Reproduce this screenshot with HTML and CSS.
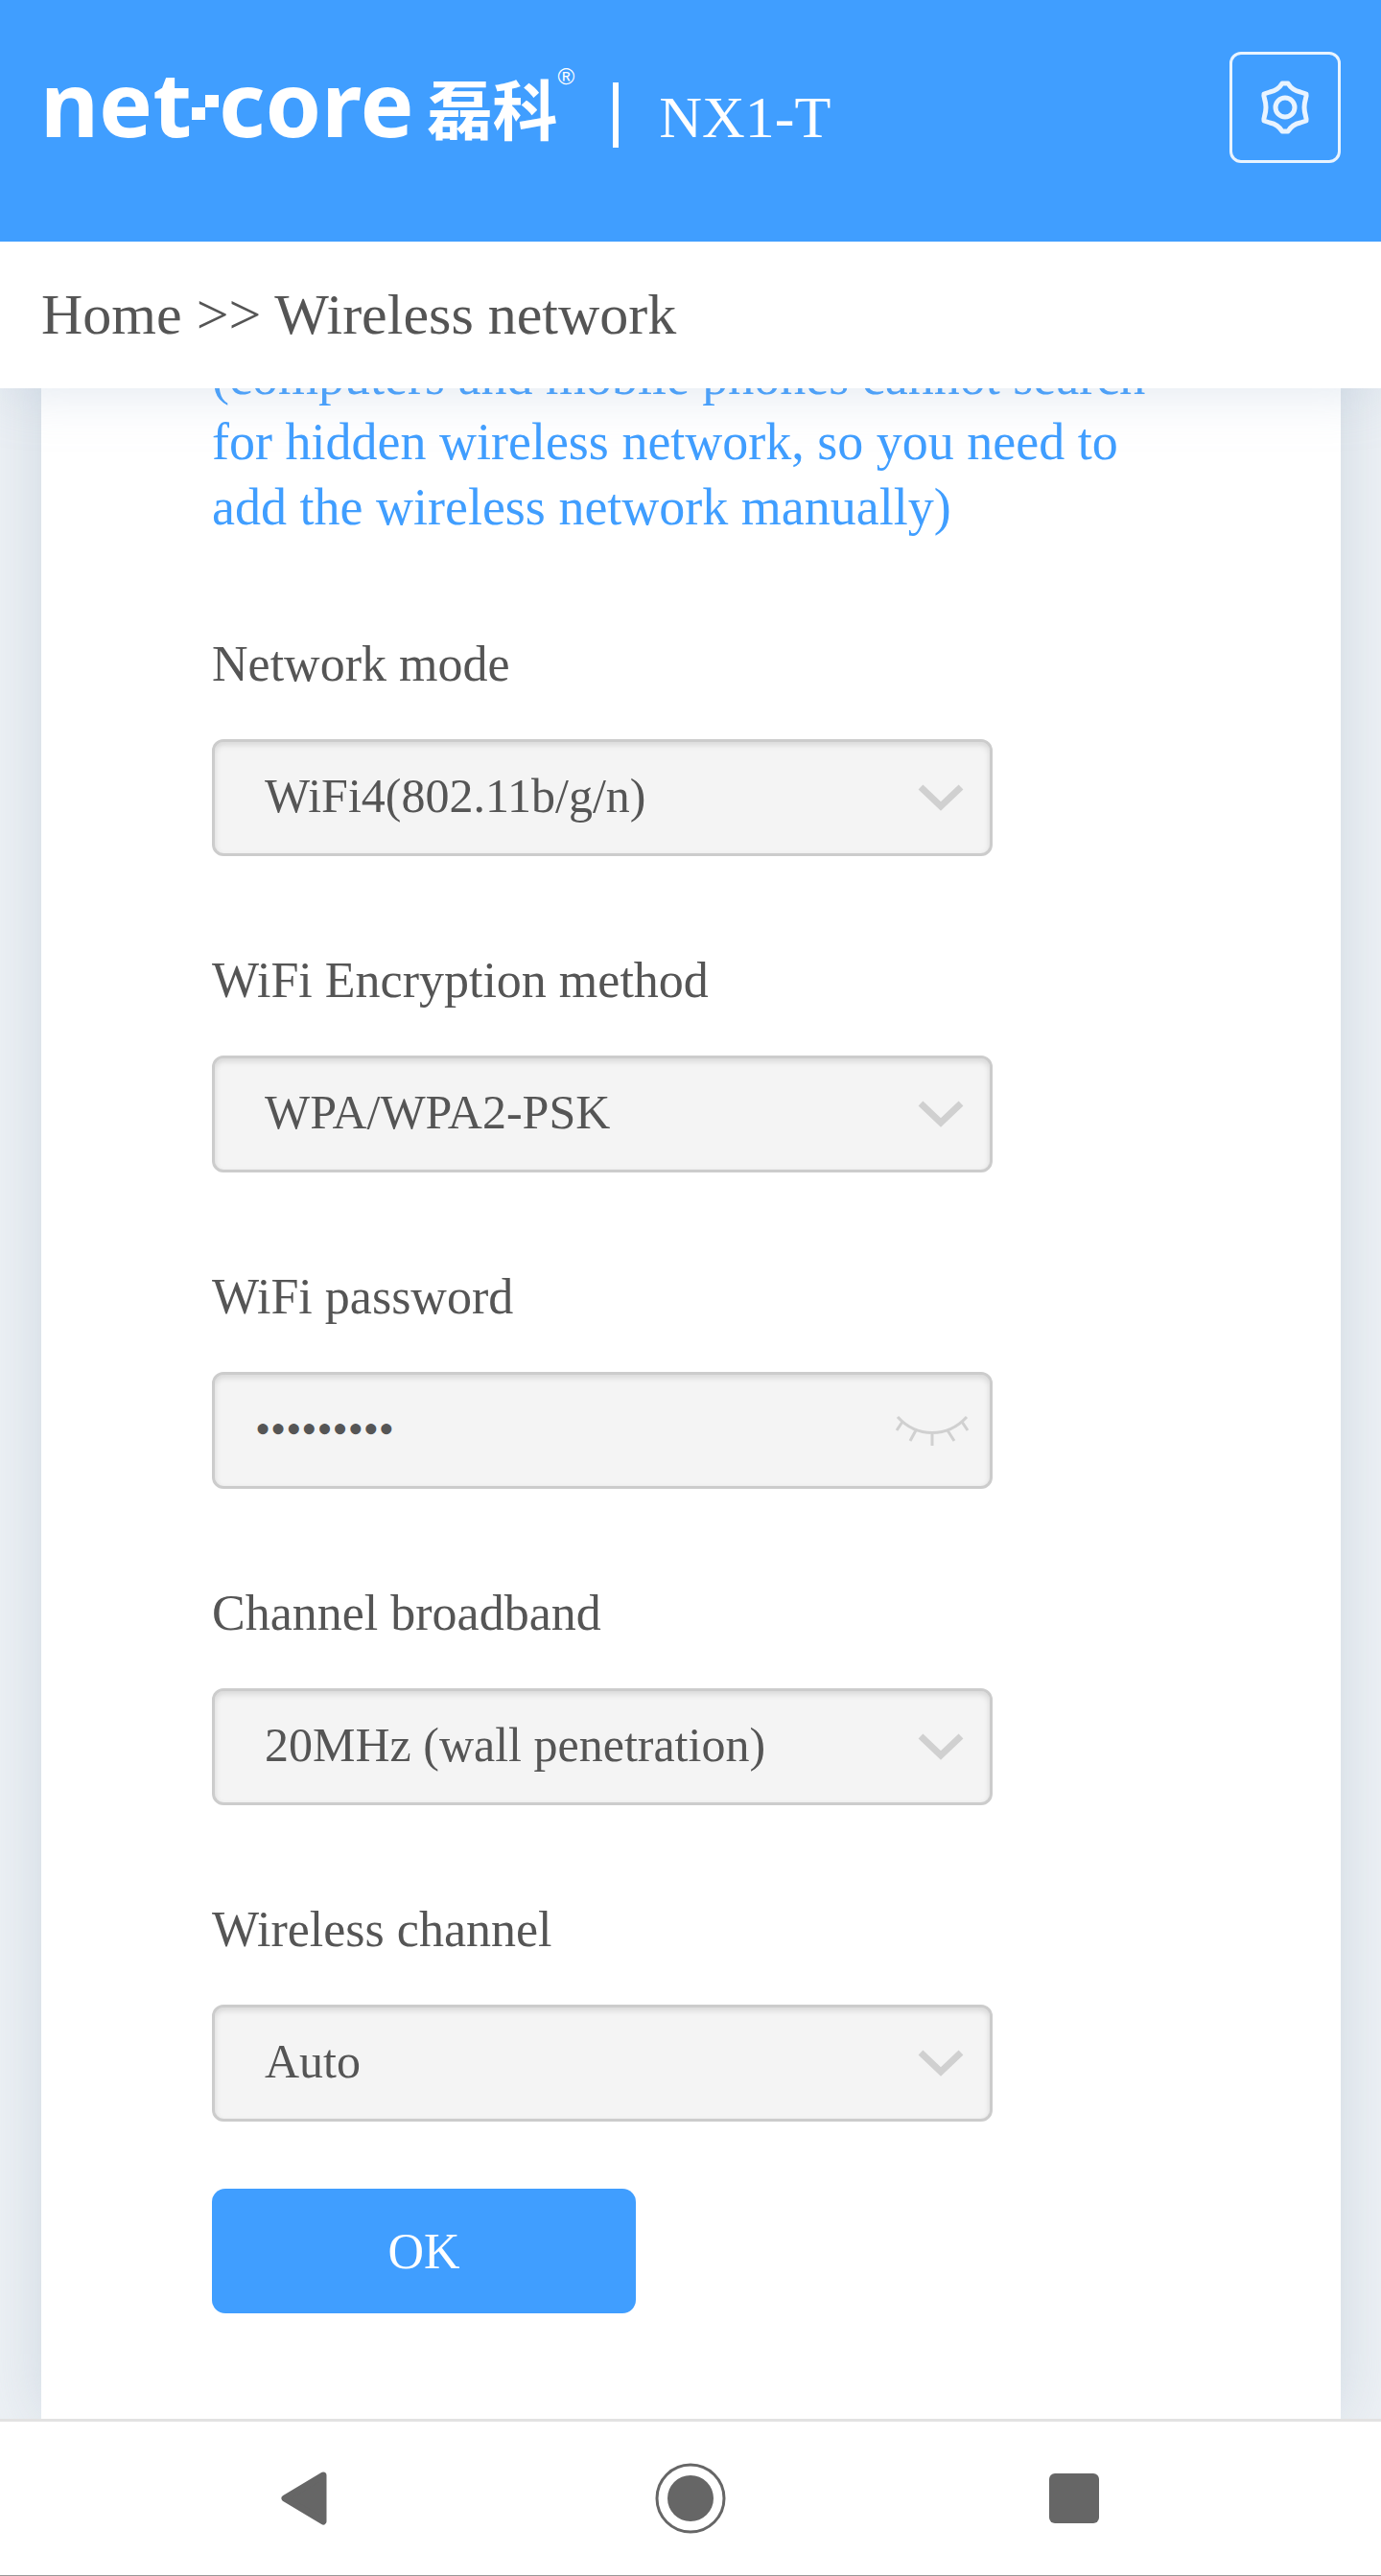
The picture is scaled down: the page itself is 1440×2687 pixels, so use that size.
FILE: index.html
```html
<!DOCTYPE html>
<html lang="en">
<head>
  <meta charset="UTF-8" />
  <meta name="viewport" content="width=device-width, initial-scale=1.0">
  <title>Wireless network</title>
  <link rel="stylesheet" href="styles.css">
</head>
<body>
  <header class="topbar">
    <div class="brand">
      <span class="logo-text">net</span>
      <svg class="logo-dot" width="28" height="44" viewBox="0 0 28 44" fill="#fff"><path d="M14 0h14v13H14zM0 13h14v13H0z"/></svg>
      <span class="logo-text">core</span>
      <span class="logo-cn" lang="zh">磊科</span>
      <span class="logo-reg">®</span>
      <span class="divider"></span>
      <span class="model">NX1-T</span>
    </div>
    <button class="settings" type="button" aria-label="Settings">
      <svg width="52" height="56" viewBox="0 0 52 56" fill="none" stroke="#e9f4ff" stroke-width="5" stroke-linejoin="round">
        <path d="M23 3h6c3 5 8 8 13 9l6 2c1 3-2 6-2 14s3 11 2 14l-6 2c-5 1-10 4-13 9h-6c-3-5-8-8-13-9l-6-2c-1-3 2-6 2-14S3 17 4 14l6-2c5-1 10-4 13-9z"/>
        <circle cx="26" cy="28" r="10"/>
      </svg>
    </button>
  </header>

  <nav class="breadcrumb"><a href="#">Home</a> &gt;&gt; Wireless network</nav>

  <main class="content">
    <form class="card">
      <p class="hint">(computers and mobile phones cannot search for hidden wireless network, so you need to add the wireless network manually)</p>

      <div class="field">
        <label for="mode">Network mode</label>
        <div class="control">
          <select id="mode"><option>WiFi4(802.11b/g/n)</option></select>
          <svg class="arrow" width="48" height="28" viewBox="0 0 48 28"><path d="M3 3l21 20L45 3"/></svg>
        </div>
      </div>

      <div class="field">
        <label for="encryption">WiFi Encryption method</label>
        <div class="control">
          <select id="encryption"><option>WPA/WPA2-PSK</option></select>
          <svg class="arrow" width="48" height="28" viewBox="0 0 48 28"><path d="M3 3l21 20L45 3"/></svg>
        </div>
      </div>

      <div class="field">
        <label for="password">WiFi password</label>
        <div class="control">
          <input type="password" id="password" value="123456789">
          <button class="eye" type="button" aria-label="Show password">
            <svg width="78" height="34" viewBox="0 0 78 34"><path d="M3 3c20 22 52 22 72 0M8 8l-6 9M22 17l-6 11M39 20v13M55 17l7 11M70 8l6 9"/></svg>
          </button>
        </div>
      </div>

      <div class="field">
        <label for="bandwidth">Channel broadband</label>
        <div class="control">
          <select id="bandwidth"><option>20MHz (wall penetration)</option></select>
          <svg class="arrow" width="48" height="28" viewBox="0 0 48 28"><path d="M3 3l21 20L45 3"/></svg>
        </div>
      </div>

      <div class="field">
        <label for="channel">Wireless channel</label>
        <div class="control">
          <select id="channel"><option>Auto</option></select>
          <svg class="arrow" width="48" height="28" viewBox="0 0 48 28"><path d="M3 3l21 20L45 3"/></svg>
        </div>
      </div>

      <button class="submit" type="button">OK</button>
    </form>
  </main>

  <footer class="sysnav">
    <button type="button" aria-label="Back">
      <svg width="54" height="56" viewBox="0 0 54 56"><path d="M44 4L4 28l40 24z" fill="#666" stroke="#666" stroke-width="7" stroke-linejoin="round"/></svg>
    </button>
    <button type="button" aria-label="Home">
      <svg width="76" height="76" viewBox="0 0 76 76"><circle cx="38" cy="38" r="35" fill="none" stroke="#666" stroke-width="3"/><circle cx="38" cy="38" r="24" fill="#666"/></svg>
    </button>
    <button type="button" aria-label="Recent apps">
      <svg width="52" height="52" viewBox="0 0 52 52"><rect width="52" height="52" rx="6" fill="#666"/></svg>
    </button>
  </footer>
</body>
</html>
```
FILE: styles.css
```css
* { margin: 0; padding: 0; box-sizing: border-box; }
body {
  display: flex;
  flex-direction: column;
  min-height: 100vh;
  font-family: "Liberation Serif", "Times New Roman", serif;
  color: #555;
  background: #edf1f5;
}
button {
  border: none;
  background: none;
  font-family: inherit;
  cursor: pointer;
}
svg { display: block; }

.topbar {
  position: relative;
  z-index: 2;
  display: flex;
  justify-content: space-between;
  align-items: flex-start;
  padding: 54px 42px 82px;
  background: #409eff;
  color: #fff;
}
.brand {
  display: flex;
  align-items: baseline;
  height: 116px;
  line-height: 106px;
}
.logo-text {
  font-family: "Noto Sans", sans-serif;
  font-size: 94px;
  font-weight: 700;
}
.logo-cn {
  align-self: center;
  margin-left: 14px;
  font-family: "Noto Sans CJK SC", sans-serif;
  font-size: 68px;
  font-weight: 700;
}
.logo-reg {
  align-self: flex-start;
  font-family: "Liberation Sans", sans-serif;
  font-size: 24px;
  line-height: 52px;
}
.divider {
  align-self: center;
  width: 6px;
  height: 68px;
  margin: 16px 42px 0 40px;
  background: #fff;
}
.model { font-size: 62px; }
.settings {
  display: flex;
  align-items: center;
  justify-content: center;
  width: 116px;
  height: 116px;
  border: 3px solid #e9f4ff;
  border-radius: 12px;
}

.breadcrumb {
  position: relative;
  z-index: 1;
  padding: 40px 43px;
  font-size: 60px;
  line-height: 73px;
  background: #fff;
  box-shadow: 0 0 60px rgba(160, 180, 205, 0.35);
}
.breadcrumb a { color: inherit; text-decoration: none; }

.content {
  display: flex;
  flex: 1;
  padding: 0 42px 0 43px;
  overflow: hidden;
}
/* page is scrolled a little, the hint slides under the breadcrumb */
.card {
  flex: 1;
  margin-top: -46px;
  padding: 0 172px 110px 178px;
  background: #fff;
  box-shadow: 0 0 60px rgba(150, 170, 190, 0.35);
}
.hint {
  font-size: 54px;
  line-height: 68px;
  color: #409eff;
}
.field { margin-top: 100px; }
.field label {
  display: block;
  margin-bottom: 48px;
  font-size: 52px;
  line-height: 60px;
}
.control {
  position: relative;
  width: 81%;
}
.control select, .control input {
  display: block;
  appearance: none;
  width: 100%;
  height: 122px;
  border: 3px solid #ccc;
  border-radius: 12px;
  background: #f4f4f4;
  box-shadow: inset 0 3px 6px rgba(0, 0, 0, 0.12);
  color: #555;
  font-family: inherit;
  font-size: 50px;
  outline: none;
}
.control select { padding: 0 100px 4px 52px; }
.control input {
  padding: 0 120px 4px 42px;
  font-size: 46px;
}
.arrow, .eye {
  position: absolute;
  top: 50%;
  transform: translateY(-50%);
  fill: none;
  stroke: #d0d0d0;
}
.arrow {
  right: 30px;
  stroke-width: 7px;
  pointer-events: none;
}
.eye {
  right: 24px;
  stroke-width: 3px;
}
.submit {
  width: 442px;
  height: 130px;
  margin-top: 70px;
  border-radius: 14px;
  background: #409eff;
  color: #fff;
  font-size: 52px;
}

.sysnav {
  position: relative;
  z-index: 1;
  display: grid;
  grid-template-columns: repeat(3, 1fr);
  align-items: center;
  justify-items: center;
  height: 164px;
  padding: 0 120px;
  background: #fff;
  border-top: 3px solid #e2e2e2;
  border-bottom: 1px solid #999;
}
```
